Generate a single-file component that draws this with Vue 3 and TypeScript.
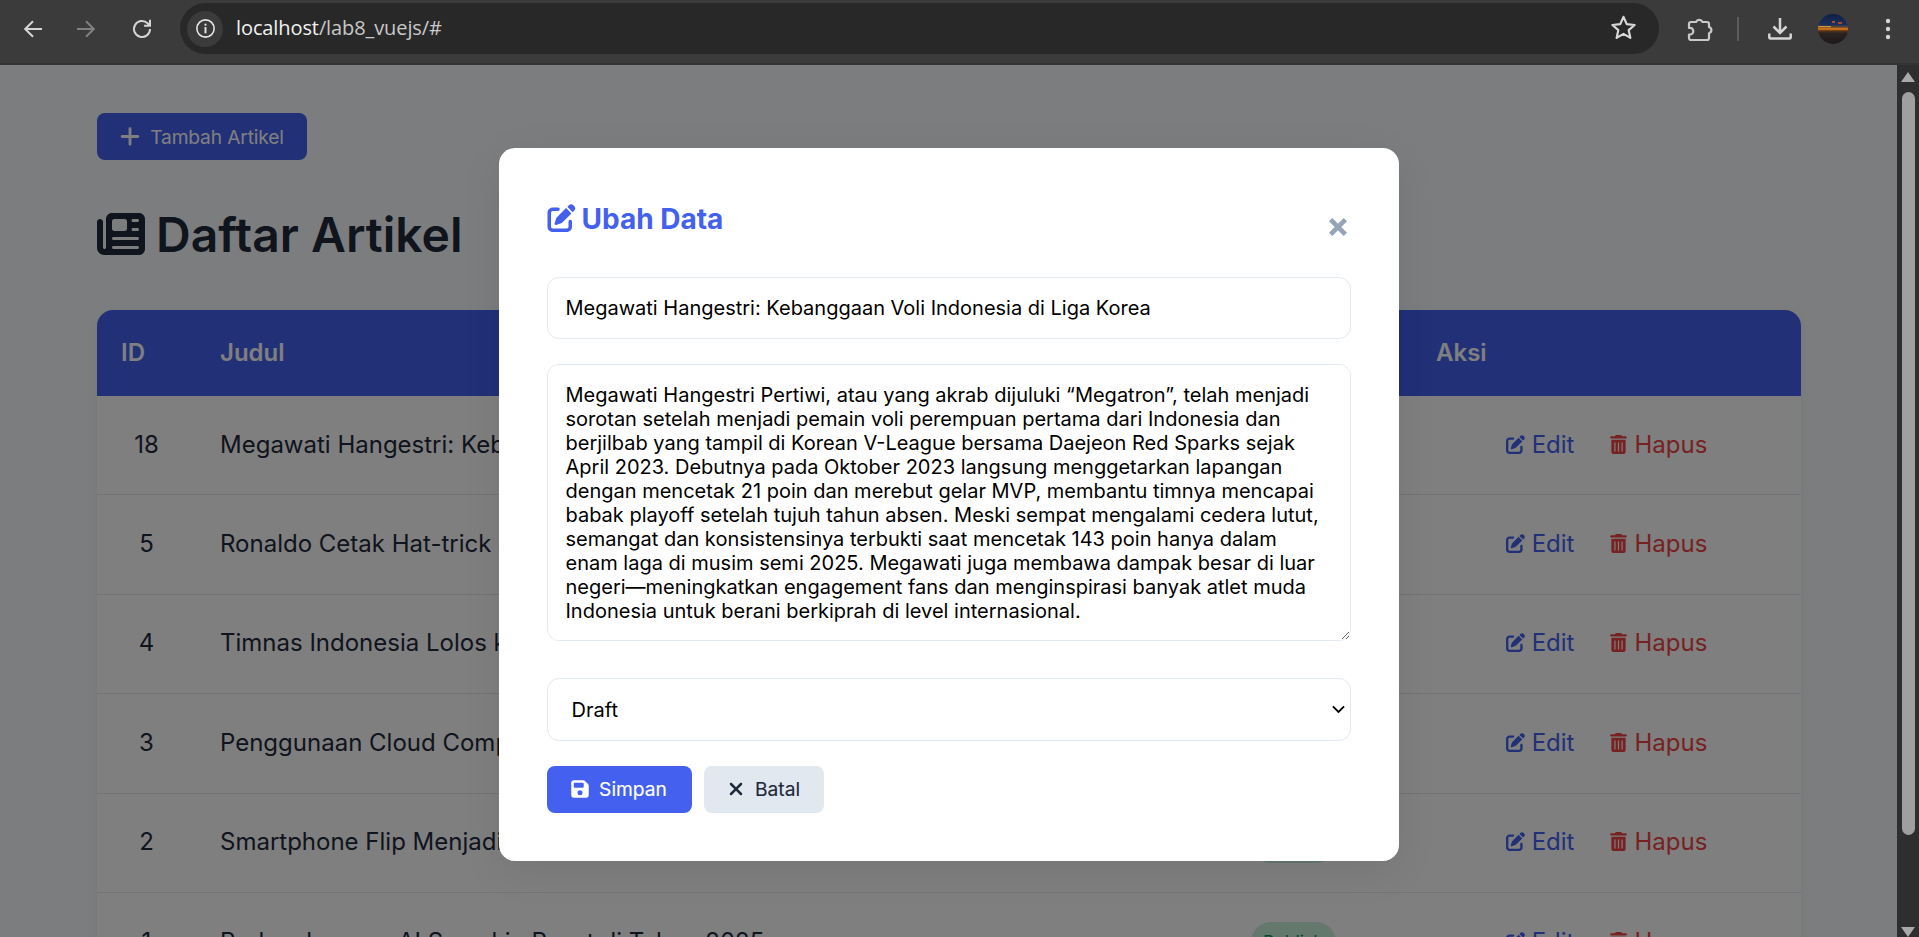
<script setup lang="ts">
import { ref } from 'vue'

interface Row { id: number; title: string; status: string }

const rows: Row[] = [
  { id: 18, title: 'Megawati Hangestri: Kebanggaan Voli Indonesia di Liga Korea', status: 'Draft' },
  { id: 5, title: 'Ronaldo Cetak Hat-trick di Laga Penentuan Liga Arab', status: 'Publish' },
  { id: 4, title: 'Timnas Indonesia Lolos ke Babak Kualifikasi Piala Dunia', status: 'Publish' },
  { id: 3, title: 'Penggunaan Cloud Computing di Perusahaan Meningkat', status: 'Publish' },
  { id: 2, title: 'Smartphone Flip Menjadi Tren Baru Tahun Ini', status: 'Publish' },
  { id: 1, title: 'Perkembangan AI Semakin Pesat di Tahun 2025', status: 'Publish' }
]

const title = ref('Megawati Hangestri: Kebanggaan Voli Indonesia di Liga Korea')
const content = ref('Megawati Hangestri Pertiwi, atau yang akrab dijuluki “Megatron”, telah menjadi sorotan setelah menjadi pemain voli perempuan pertama dari Indonesia dan berjilbab yang tampil di Korean V-League bersama Daejeon Red Sparks sejak April 2023. Debutnya pada Oktober 2023 langsung menggetarkan lapangan dengan mencetak 21 poin dan merebut gelar MVP, membantu timnya mencapai babak playoff setelah tujuh tahun absen. Meski sempat mengalami cedera lutut, semangat dan konsistensinya terbukti saat mencetak 143 poin hanya dalam enam laga di musim semi 2025. Megawati juga membawa dampak besar di luar negeri—meningkatkan engagement fans dan menginspirasi banyak atlet muda Indonesia untuk berani berkiprah di level internasional.')
const status = ref('draft')

const penPath = 'M471.6 21.7c-21.9-21.9-57.3-21.9-79.2 0L362.3 51.7l97.9 97.9 30.1-30.1c21.9-21.9 21.9-57.3 0-79.2L471.6 21.7zm-299.2 220c-6.1 6.1-10.8 13.6-13.5 21.9l-29.6 88.8c-2.9 8.6-.6 18.1 5.8 24.6s15.9 8.7 24.6 5.8l88.8-29.6c8.2-2.7 15.7-7.4 21.9-13.5L437.7 172.3 339.7 74.3 172.4 241.7zM96 64C43 64 0 107 0 160V416c0 53 43 96 96 96H352c53 0 96-43 96-96V320c0-17.7-14.3-32-32-32s-32 14.3-32 32v96c0 17.7-14.3 32-32 32H96c-17.7 0-32-14.3-32-32V160c0-17.7 14.3-32 32-32h96c17.7 0 32-14.3 32-32s-14.3-32-32-32H96z'
const trashPath = 'M135.2 17.7C140.6 6.8 151.7 0 163.8 0H284.2c12.1 0 23.2 6.8 28.6 17.7L320 32h96c17.7 0 32 14.3 32 32s-14.3 32-32 32H32C14.3 96 0 81.7 0 64S14.3 32 32 32h96l7.2-14.3zM32 128H416V448c0 35.3-28.7 64-64 64H96c-35.3 0-64-28.7-64-64V128zm96 64c-8.8 0-16 7.2-16 16V432c0 8.8 7.2 16 16 16s16-7.2 16-16V208c0-8.8-7.2-16-16-16zm96 0c-8.8 0-16 7.2-16 16V432c0 8.8 7.2 16 16 16s16-7.2 16-16V208c0-8.8-7.2-16-16-16zm96 0c-8.8 0-16 7.2-16 16V432c0 8.8 7.2 16 16 16s16-7.2 16-16V208c0-8.8-7.2-16-16-16z'
const xPath = 'M342.6 150.6c12.5-12.5 12.5-32.8 0-45.3s-32.8-12.5-45.3 0L192 210.7 86.6 105.4c-12.5-12.5-32.8-12.5-45.3 0s-12.5 32.8 0 45.3L146.7 256 41.4 361.4c-12.5 12.5-12.5 32.8 0 45.3s32.8 12.5 45.3 0L192 301.3 297.4 406.6c12.5 12.5 32.8 12.5 45.3 0s12.5-32.8 0-45.3L237.3 256 342.6 150.6z'
</script>

<template>
  <div class="window">
    <header class="chrome">
      <div class="nav">
        <svg class="nav-icon" viewBox="0 0 24 24"><path d="M21 12H4.500M12 4.200 4.200 12l7.800 7.800" /></svg>
        <svg class="nav-icon dim" viewBox="0 0 24 24"><path d="M3 12h16.500M12 4.200l7.800 7.800-7.800 7.800" /></svg>
        <svg class="nav-icon reload" viewBox="0 0 24 24"><path d="M20 12a8 8 0 1 1-2.400-5.700L20 8.700M20 2.800v5.900h-5.900" /></svg>
      </div>
      <div class="omnibox">
        <div class="info">
          <svg viewBox="0 0 20 20" width="21" height="21"><circle cx="10" cy="10" r="8.200" fill="none" stroke="#e8e8e8" stroke-width="1.500" /><rect x="9.100" y="8.600" width="1.800" height="6" fill="#e8e8e8" /><rect x="9.100" y="5.400" width="1.800" height="1.900" fill="#e8e8e8" /></svg>
        </div>
        <span class="url">localhost<span class="url-dim">/lab8_vuejs/#</span></span>
        <svg class="star" viewBox="0 0 24 24"><path d="M12 3.200l2.700 6 6.500.7-4.900 4.300 1.400 6.400L12 17.300l-5.700 3.300 1.400-6.400-4.900-4.300 6.500-.7z" /></svg>
      </div>
      <div class="tools">
        <svg class="ext" viewBox="0 0 26 27"><path d="M4 7h5a3.600 3.600 0 0 1 6.500 0H20a2 2 0 0 1 2 2v3a3.200 3.200 0 0 1 0 6.200V23a2 2 0 0 1-2 2H4a2 2 0 0 1-2-2v-3.500h1a3.300 3.300 0 0 0 0-6.600H2V9a2 2 0 0 1 2-2z" /></svg>
        <span class="sep"></span>
        <svg class="dl" viewBox="0 0 24 24"><path d="M12 1v14.500M5.500 9.500 12 16l6.500-6.500M1.300 16.500v4.200a2 2 0 0 0 .9.9h19.600a2 2 0 0 0 .9-.9v-4.200" /></svg>
        <svg class="avatar" viewBox="0 0 30 30">
          <defs>
            <clipPath id="av"><circle cx="15" cy="15" r="15" /></clipPath>
            <linearGradient id="sky" x1="0" y1="0" x2="0" y2="1">
              <stop offset="0" stop-color="#0e1f47" />
              <stop offset=".36" stop-color="#1c2f5c" />
              <stop offset=".44" stop-color="#6a4a30" />
              <stop offset=".5" stop-color="#ea7f10" />
              <stop offset=".56" stop-color="#5a3418" />
              <stop offset=".64" stop-color="#2b2320" />
              <stop offset="1" stop-color="#1c1919" />
            </linearGradient>
          </defs>
          <g clip-path="url(#av)">
            <rect width="30" height="30" fill="url(#sky)" />
            <rect x="0" y="12" width="13" height="1.200" fill="#d8963a" />
            <rect x="14" y="7" width="3" height="2" fill="#a84c36" />
            <rect x="20" y="8" width="4" height="2" fill="#a04a34" />
          </g>
        </svg>
        <svg class="dots" viewBox="0 0 6 24"><circle cx="3" cy="4" r="2.200" /><circle cx="3" cy="12" r="2.200" /><circle cx="3" cy="20" r="2.200" /></svg>
      </div>
    </header>

    <div class="viewport">
      <main class="page">
        <div class="container">
          <button class="btn-add" type="button">
            <svg viewBox="0 0 448 512" class="add-icon"><path d="M256 80c0-17.700-14.300-32-32-32s-32 14.300-32 32V224H48c-17.700 0-32 14.300-32 32s14.300 32 32 32H192V432c0 17.700 14.300 32 32 32s32-14.300 32-32V288H400c17.700 0 32-14.300 32-32s-14.300-32-32-32H256V80z" /></svg>
            Tambah Artikel
          </button>
          <h1 class="page-title">
            <svg viewBox="0 0 512 512" class="news-icon"><path d="M96 96c0-35.300 28.700-64 64-64H448c35.300 0 64 28.700 64 64V416c0 35.300-28.700 64-64 64H80c-44.200 0-80-35.800-80-80V128c0-17.700 14.300-32 32-32s32 14.300 32 32V400c0 8.800 7.200 16 16 16s16-7.200 16-16V96zm64 24v80c0 13.300 10.700 24 24 24H296c13.300 0 24-10.700 24-24V120c0-13.300-10.700-24-24-24H184c-13.300 0-24 10.700-24 24zm208-8c0 8.800 7.200 16 16 16h48c8.800 0 16-7.200 16-16s-7.200-16-16-16H384c-8.800 0-16 7.200-16 16zm0 96c0 8.800 7.200 16 16 16h48c8.800 0 16-7.200 16-16s-7.200-16-16-16H384c-8.800 0-16 7.200-16 16zM160 304c0 8.800 7.200 16 16 16H432c8.800 0 16-7.200 16-16s-7.200-16-16-16H176c-8.800 0-16 7.200-16 16zm0 96c0 8.800 7.200 16 16 16H432c8.800 0 16-7.200 16-16s-7.200-16-16-16H176c-8.800 0-16 7.200-16 16z" /></svg>
            Daftar Artikel
          </h1>
          <table class="table">
            <colgroup>
              <col class="c-id" /><col class="c-title" /><col class="c-status" /><col class="c-act" />
            </colgroup>
            <thead>
              <tr><th>ID</th><th>Judul</th><th>Status</th><th>Aksi</th></tr>
            </thead>
            <tbody>
              <tr v-for="row in rows" :key="row.id">
                <td class="cell-id">{{ row.id }}</td>
                <td>{{ row.title }}</td>
                <td><span class="badge" :class="row.status.toLowerCase()">{{ row.status }}</span></td>
                <td>
                  <div class="actions">
                    <a class="act edit"><svg class="i-pen" viewBox="0 0 512 512"><path :d="penPath" /></svg>Edit</a>
                    <a class="act del"><svg class="i-trash" viewBox="0 0 448 512"><path :d="trashPath" /></svg>Hapus</a>
                  </div>
                </td>
              </tr>
            </tbody>
          </table>
        </div>
      </main>

      <div class="overlay">
        <form class="modal" @submit.prevent>
          <div class="modal-head">
            <h2 class="modal-title">
              <svg viewBox="0 0 512 512"><path :d="penPath" /></svg>
              Ubah Data
            </h2>
            <button class="close" type="button" aria-label="Tutup">
              <svg viewBox="0 0 20 20"><path d="M4.300 1 10 6.700 15.700 1 19 4.300 13.300 10l5.700 5.700L15.700 19 10 13.300 4.300 19 1 15.700 6.700 10 1 4.300z" /></svg>
            </button>
          </div>
          <input v-model="title" class="field input" type="text" />
          <textarea v-model="content" class="field area" rows="10"></textarea>
          <div class="select-wrap">
            <select v-model="status" class="field select">
              <option value="draft">Draft</option>
              <option value="publish">Publish</option>
            </select>
            <svg class="chevron" viewBox="0 0 14 9"><path d="M1 1.200 7 7.200l6-6" /></svg>
          </div>
          <div class="modal-actions">
            <button class="btn save" type="submit">
              <svg viewBox="0 0 448 512"><path d="M64 32C28.700 32 0 60.700 0 96V416c0 35.300 28.700 64 64 64H384c35.300 0 64-28.700 64-64V173.300c0-17-6.700-33.300-18.700-45.300L352 50.700C340 38.700 323.700 32 306.700 32H64zm0 96c0-17.700 14.300-32 32-32H288c17.700 0 32 14.300 32 32v64c0 17.700-14.300 32-32 32H96c-17.700 0-32-14.300-32-32V128zM224 288a64 64 0 1 1 0 128 64 64 0 1 1 0-128z" /></svg>
              Simpan
            </button>
            <button class="btn cancel" type="button">
              <svg viewBox="0 0 384 512"><path :d="xPath" /></svg>
              Batal
            </button>
          </div>
        </form>
      </div>

      <aside class="scrollbar">
        <span class="arrow up"></span>
        <span class="thumb"></span>
        <span class="arrow down"></span>
      </aside>
    </div>
  </div>
</template>

<style scoped>
.window {
  width: 1919px;
  height: 937px;
  display: flex;
  flex-direction: column;
  overflow: hidden;
  font-family: Inter, "Liberation Sans", sans-serif;
}

/* browser frame */
.chrome {
  height: 65px;
  flex: none;
  box-sizing: border-box;
  background: #3b3b3b;
  border-bottom: 2px solid #343434;
  display: flex;
  align-items: flex-start;
  padding-top: 3px;
}
.nav {
  width: 180px;
  box-sizing: border-box;
  padding: 14px 0 0 21px;
  display: flex;
  gap: 29px;
  flex: none;
}
.nav-icon {
  width: 24px;
  height: 24px;
  fill: none;
  stroke: #d5d5d5;
  stroke-width: 2;
}
.nav-icon.dim { stroke: #808080; }
.nav-icon.reload { margin-left: 3px; }
.omnibox {
  width: 1479px;
  height: 51px;
  flex: none;
  background: #282828;
  border-radius: 26px;
  display: flex;
  align-items: center;
  box-sizing: border-box;
  padding: 0 21px 0 7px;
}
.info {
  width: 36px;
  height: 36px;
  border-radius: 50%;
  background: #3b3b3b;
  display: flex;
  align-items: center;
  justify-content: center;
  flex: none;
}
.url {
  margin-left: 13px;
  font: 20px "Open Sans", sans-serif;
  color: #f2f2f2;
  flex: 1;
  letter-spacing: -0.1px;
  position: relative;
  top: -1px;
}
.url-dim { color: #c8c8c8; }
.star {
  width: 29px;
  height: 29px;
  margin-top: -2px;
  fill: none;
  stroke: #d8d8d8;
  stroke-width: 1.800;
  stroke-linejoin: round;
}
.tools {
  flex: 1;
  display: flex;
  align-items: center;
  height: 51px;
}
.ext {
  width: 26px;
  height: 27px;
  margin-left: 28px;
  fill: none;
  stroke: #c9c9c9;
  stroke-width: 2.200;
  stroke-linejoin: round;
}
.sep {
  width: 2px;
  height: 24px;
  background: #5c5c5c;
  margin-left: 24px;
}
.dl {
  width: 24px;
  height: 24px;
  margin-left: 29px;
  fill: none;
  stroke: #d5d5d5;
  stroke-width: 2.500;
}
.avatar {
  width: 30px;
  height: 30px;
  margin-left: 26px;
}
.dots {
  width: 6px;
  height: 24px;
  margin-left: 37px;
  fill: #d5d5d5;
}

/* page */
.viewport {
  flex: 1;
  min-height: 0;
  display: flex;
  position: relative;
}
.page {
  flex: 1;
  min-width: 0;
  overflow: hidden;
  background: #f8fafc;
}
.container {
  margin: 48px 96px 0 97px;
}
.btn-add {
  height: 47px;
  width: 210px;
  display: flex;
  align-items: center;
  justify-content: center;
  gap: 10px;
  border: none;
  border-radius: 8px;
  background: #4361ee;
  color: #fff;
  font: 400 19.2px Inter, sans-serif;
  letter-spacing: -0.15px;
}
.add-icon { width: 20px; height: 23px; fill: currentColor; }
.page-title {
  margin: 44px 0 0;
  height: 60px;
  display: flex;
  align-items: center;
  gap: 11px;
  font-size: 48px;
  font-weight: 600;
  color: #1e293b;
}
.news-icon { width: 48px; height: 48px; fill: currentColor; }
.table {
  width: 100%;
  margin-top: 46px;
  border-collapse: separate;
  border-spacing: 0;
  table-layout: fixed;
  background: #fff;
  border-radius: 16px;
  box-shadow: 0 4px 12px rgba(0, 0, 0, 0.05);
  font-size: 24px;
  color: #1e293b;
}
.c-id { width: 99px; }
.c-title { width: 1031px; }
.c-status { width: 185px; }
th {
  height: 86px;
  padding: 0 24px 2px;
  box-sizing: border-box;
  background: #4361ee;
  color: #fff;
  font-weight: 600;
  text-align: left;
}
th:first-child { border-top-left-radius: 16px; }
th:last-child { border-top-right-radius: 16px; }
td {
  padding: 0 24px 2px;
  border-bottom: 1px solid #e2e8f0;
  box-sizing: border-box;
}
tbody tr td { height: 99.4px; }
.cell-id { text-align: center; }
.badge {
  display: inline-block;
  margin-top: 2px;
  padding: 9px 12px;
  border-radius: 20px;
  font-size: 17.6px;
  line-height: 22px;
  vertical-align: middle;
}
.badge.publish { background: #c8f0dd; color: #059669; }
.badge.draft { background: #fef3c7; color: #d97706; }
.actions {
  display: flex;
  justify-content: center;
  gap: 36px;
}
.act {
  display: flex;
  align-items: center;
  gap: 7px;
}
.i-pen { width: 19px; height: 19px; fill: currentColor; }
.i-trash { width: 17px; height: 19px; fill: currentColor; }
.edit { color: #4361ee; }
.del { color: #ef4444; }

/* modal */
.overlay {
  position: absolute;
  inset: 0 22px 0 0;
  background: rgba(0, 0, 0, 0.5);
}
.modal {
  position: absolute;
  left: 498.500px;
  top: 83px;
  width: 900px;
  height: 713px;
  box-sizing: border-box;
  padding: 48px;
  background: #fff;
  border-radius: 16px;
  box-shadow: 0 10px 40px rgba(0, 0, 0, 0.08);
  display: flex;
  flex-direction: column;
}
.modal-head {
  display: flex;
  justify-content: space-between;
  height: 42px;
  margin-bottom: 39px;
}
.modal-title {
  margin: 0;
  display: flex;
  align-items: center;
  gap: 6px;
  height: 46px;
  font-size: 28px;
  font-weight: 700;
  line-height: 46px;
  color: #4361ee;
}
.modal-title svg { width: 29px; height: 28px; fill: currentColor; margin-top: -2px; }
.close {
  width: 20px;
  height: 20px;
  margin: 21px 3px 0 0;
  padding: 0;
  border: none;
  background: none;
}
.close svg { width: 20px; height: 20px; fill: #94a3b8; display: block; }
.field {
  display: block;
  width: 100%;
  box-sizing: border-box;
  border: 1px solid #e2e8f0;
  border-radius: 12px;
  padding: 18px;
  font-family: Inter, sans-serif;
  font-size: 20px;
  color: #000;
  background: #fff;
  outline: none;
}
.input { height: 62px; margin-bottom: 25px; }
.area { height: 278px; margin-bottom: 37px; line-height: 24px; resize: vertical; }
.select-wrap {
  position: relative;
  margin-bottom: 25px;
}
.select {
  height: 63px;
  appearance: none;
  padding: 0 40px 0 24px;
}
.chevron {
  position: absolute;
  right: 6px;
  top: 27px;
  width: 13px;
  height: 9px;
  fill: none;
  stroke: #000;
  stroke-width: 2;
  pointer-events: none;
}
.modal-actions {
  display: flex;
  gap: 12px;
}
.btn {
  height: 47px;
  display: flex;
  align-items: center;
  justify-content: center;
  gap: 10px;
  padding: 0 0 2px;
  border: none;
  border-radius: 8px;
  font: 400 19.2px Inter, sans-serif;
  -webkit-text-stroke: 0.15px currentColor;
}
.btn svg { width: 18px; height: 20px; fill: currentColor; }
.save { width: 145px; background: #4361ee; color: #fff; }
.cancel { width: 120px; background: #e2e8f0; color: #1e293b; }

/* scrollbar */
.scrollbar {
  width: 22px;
  flex: none;
  background: #2e2e2e;
  position: relative;
}
.arrow {
  position: absolute;
  left: 4px;
  width: 0;
  height: 0;
  border-left: 7px solid transparent;
  border-right: 7px solid transparent;
}
.arrow.up { top: 7px; border-bottom: 10px solid #a9a9a9; }
.arrow.down { bottom: 0; border-top: 10px solid #a9a9a9; }
.thumb {
  position: absolute;
  left: 5px;
  top: 27px;
  width: 13px;
  height: 743px;
  border-radius: 7px;
  background: #9f9f9f;
}
</style>
